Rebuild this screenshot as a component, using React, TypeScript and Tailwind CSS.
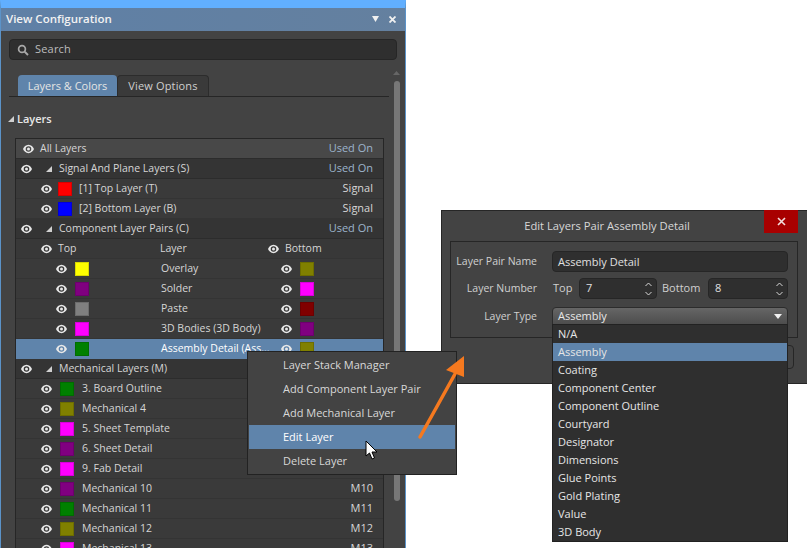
const font = "font-['Open_Sans','Liberation_Sans',sans-serif]";

function Eye({ className = '' }: { className?: string }) {
  return (
    <svg width="11" height="10" viewBox="0 0 11 10" className={`shrink-0 ${className}`}>
      <path
        fillRule="evenodd"
        fill="#e8e8e8"
        d="M5.5 0.8C8.2 0.8 10.2 3 11 5C10.2 7 8.2 9.2 5.5 9.2C2.8 9.2 0.8 7 0 5C0.8 3 2.8 0.8 5.5 0.8ZM5.5 2.2A2.8 2.8 0 1 0 5.5 7.8A2.8 2.8 0 1 0 5.5 2.2Z"
      />
      <circle cx="5.5" cy="5" r="1.5" fill="#e8e8e8" />
    </svg>
  );
}

function Corner() {
  return (
    <svg width="6" height="6" viewBox="0 0 6 6" className="shrink-0">
      <polygon points="6,0 6,6 0,6" fill="#d0d0d0" />
    </svg>
  );
}

function Swatch({ color }: { color: string }) {
  return <div className="w-[14px] h-[14px] shrink-0 border border-black/15" style={{ backgroundColor: color }} />;
}

function GroupRow({ name, right }: { name: string; right: string }) {
  return (
    <div className="h-5 flex items-center bg-[#343434] border-b border-[#2c2c2c] pl-[5px] pr-[10px]">
      <Eye />
      <div className="ml-[14px] mr-[7px]"><Corner /></div>
      <span className="text-[10.5px] text-[#d6d6d6]">{name}</span>
      <span className="ml-auto text-[#9db4cc]">{right}</span>
    </div>
  );
}

function LayerRow({ name, color, right, wide }: { name: string; color: string; right?: string; wide?: boolean }) {
  return (
    <div className="h-5 flex items-center bg-[#3a3a3a] border-b border-[#343434] pl-[25px] pr-[10px]">
      <Eye />
      <div className={wide ? 'ml-[8px] mr-[8px]' : 'ml-[6px] mr-[7px]'}><Swatch color={color} /></div>
      <span className="text-[10.5px] text-[#d6d6d6]">{name}</span>
      {right && <span className="ml-auto text-[#d6d6d6]">{right}</span>}
    </div>
  );
}

function PairRow({ name, top, bottom, selected }: { name: string; top: string; bottom: string; selected?: boolean }) {
  return (
    <div className={`h-5 grid grid-cols-[145px_110px_1fr] items-center border-b ${selected ? 'bg-[#5f84ab] border-[#5f84ab]' : 'bg-[#3a3a3a] border-[#343434]'}`}>
      <div className="flex items-center pl-[40px] gap-[8px]">
        <Eye />
        <Swatch color={top} />
      </div>
      <span className={`whitespace-nowrap text-[10.5px] ${selected ? 'text-white' : 'text-[#d6d6d6]'}`}>{name}</span>
      <div className="flex items-center pl-[10px] gap-[8px]">
        <Eye />
        <Swatch color={bottom} />
      </div>
    </div>
  );
}

const mech = [
  ['3. Board Outline', '#008000', ''],
  ['Mechanical 4', '#808000', ''],
  ['5. Sheet Template', '#ff00ff', ''],
  ['6. Sheet Detail', '#800080', ''],
  ['9. Fab Detail', '#ff00ff', ''],
  ['Mechanical 10', '#800080', 'M10'],
  ['Mechanical 11', '#008000', 'M11'],
  ['Mechanical 12', '#808000', 'M12'],
  ['Mechanical 13', '#ff00ff', 'M13'],
];

function Panel() {
  return (
    <div className="absolute left-0 top-0 w-[406px] h-[548px] overflow-hidden bg-[#434343] border-x border-x-[#5b93c9] border-t-[8px] border-t-[#61afff] text-[11px]">
      <div className="h-[23px] pb-px flex items-center pl-[5px] pr-[9px] bg-gradient-to-r from-[#5f80a6] to-[#64809f]">
        <span className="text-[11.5px] font-semibold text-[#f2f2f2]">View Configuration</span>
        <svg width="7" height="6" viewBox="0 0 7 6" className="ml-auto mr-[10px]"><polygon points="0,0 7,0 3.5,6" fill="#f0f0f0" /></svg>
        <svg width="7" height="7" viewBox="0 0 7 7"><path d="M0.5 0.5L6.5 6.5M6.5 0.5L0.5 6.5" stroke="#f0f0f0" strokeWidth="1.8" /></svg>
      </div>

      <div className="flex">
        <div className="w-[392px] pl-[8px]">
          <div className="mt-2 h-[21px] w-[388px] flex items-center bg-[#2f2f2f] border border-[#262626] rounded pl-[7px] gap-[6px] text-[#bdbdbd]">
            <svg width="12" height="12" viewBox="0 0 12 12"><circle cx="5" cy="5" r="3.4" fill="none" stroke="#a8a8a8" strokeWidth="1.7" /><path d="M7.6 7.6L11 11" stroke="#a8a8a8" strokeWidth="2" /></svg>
            <span className="tracking-[0.2px]">Search</span>
          </div>

          <div className="mt-[15px] w-[380px] flex pl-[9px] border-b border-[#262626] h-[22px]">
            <div className="w-[99px] pt-px flex items-center justify-center bg-[#5f84ab] rounded-t text-[#e4e4e4]">Layers &amp; Colors</div>
            <div className="w-[92px] pt-px flex items-center justify-center bg-[#3a3a3a] border border-b-0 border-[#2c2c2c] rounded-t text-[#cfcfcf] tracking-[0.15px]">View Options</div>
          </div>

          <div className="mt-[14px] -ml-px h-4 flex items-center gap-[3px] font-semibold text-[#e8e8e8]">
            <Corner />
            Layers
          </div>

          <div className="mt-[11px] ml-[6px] w-[369px] border border-[#262626] border-b-0">
            <div className="h-5 flex items-center bg-[#484848] border-b border-[#2c2c2c] pl-[7px] pr-[10px] gap-[6px]">
              <Eye />
              <span className="text-[10.5px] text-[#d6d6d6]">All Layers</span>
              <span className="ml-auto text-[#9db4cc]">Used On</span>
            </div>
            <GroupRow name="Signal And Plane Layers (S)" right="Used On" />
            <LayerRow name="[1] Top Layer (T)" color="#ff0000" right="Signal" />
            <LayerRow name="[2] Bottom Layer (B)" color="#0000ff" right="Signal" />
            <GroupRow name="Component Layer Pairs (C)" right="Used On" />
            <div className="h-5 grid grid-cols-[144px_108px_1fr] items-center bg-[#383838] border-b border-[#343434] text-[10.5px] text-[#d6d6d6]">
              <div className="flex items-center pl-[25px] gap-[6px]"><Eye />Top</div>
              <span>Layer</span>
              <div className="flex items-center gap-[6px]"><Eye />Bottom</div>
            </div>
            <PairRow name="Overlay" top="#ffff00" bottom="#808000" />
            <PairRow name="Solder" top="#800080" bottom="#ff00ff" />
            <PairRow name="Paste" top="#808080" bottom="#800000" />
            <PairRow name="3D Bodies (3D Body)" top="#ff00ff" bottom="#800080" />
            <PairRow name="Assembly Detail (Ass..." top="#008000" bottom="#808000" selected />
            <GroupRow name="Mechanical Layers (M)" right="" />
            {mech.map(([name, color, right]) => (
              <LayerRow key={name} name={name} color={color} right={right} wide />
            ))}
          </div>
        </div>

        <div className="w-[7px] mt-[40px] flex flex-col items-center">
          <svg width="7" height="4" viewBox="0 0 7 4"><polygon points="0,4 7,4 3.5,0" fill="#666" /></svg>
          <div className="mt-[6px] w-[6px] h-[420px] rounded-full bg-[#777]" />
        </div>
      </div>
    </div>
  );
}

function ContextMenu() {
  const items = ['Layer Stack Manager', 'Add Component Layer Pair', 'Add Mechanical Layer', 'Edit Layer', 'Delete Layer'];
  return (
    <div className="absolute left-[247px] top-[351px] w-[210px] h-[124px] bg-[#434343] border border-[#222] p-px text-[11px] text-[#d8d8d8]">
      {items.map((item) => (
        <div key={item} className={`h-6 flex items-center pl-[34px] ${item === 'Edit Layer' ? 'bg-[#5f84ab] text-white' : ''}`}>{item}</div>
      ))}
    </div>
  );
}

function Field({ label, className = '', children }: { label: string; className?: string; children: React.ReactNode }) {
  return (
    <div className={`h-[21px] flex items-center ${className}`}>
      <span className="w-[86px] text-right text-[10.5px] text-[#d0d0d0] shrink-0">{label}</span>
      <div className="ml-[15px] w-[236px] flex items-center">{children}</div>
    </div>
  );
}

function Spinner({ value, className }: { value: string; className: string }) {
  return (
    <div className={`h-[21px] flex items-center justify-between bg-[#2f2f2f] border border-[#262626] rounded pl-[6px] pr-1 text-[#e0e0e0] ${className}`}>
      {value}
      <svg width="7" height="14" viewBox="0 0 7 14" fill="none" stroke="#d8d8d8" strokeWidth="1"><path d="M0.5 4L3.5 1L6.5 4M0.5 10L3.5 13L6.5 10" /></svg>
    </div>
  );
}

function Dialog() {
  const options = ['N/A', 'Assembly', 'Coating', 'Component Center', 'Component Outline', 'Courtyard', 'Designator', 'Dimensions', 'Glue Points', 'Gold Plating', 'Value', '3D Body'];
  return (
    <div className="absolute left-[441px] top-[210px] w-[366px] h-[174px] bg-[#434343] border border-[#262626] border-r-0 text-[11px]">
      <div className="h-[30px] flex items-center justify-center pr-[35px] text-[11.2px] text-[#d8d8d8]">Edit Layers Pair Assembly Detail</div>
      <div className="absolute right-[9px] top-[-1px] w-[34px] h-[23px] bg-[#a80000] flex items-center justify-center">
        <svg width="9" height="9" viewBox="0 0 9 9"><path d="M1 1L8 8M8 1L1 8" stroke="#f4dede" strokeWidth="1.6" /></svg>
      </div>
      <div className="mx-2 w-[348px] h-[97px] border border-[#262626] pt-[9px] flex flex-col gap-[6px]">
        <Field label="Layer Pair Name">
          <div className="w-full h-[21px] pt-px flex items-center bg-[#2f2f2f] border border-[#262626] rounded pl-[5px] text-[#e0e0e0]">Assembly Detail</div>
        </Field>
        <Field label="Layer Number">
          <span className="w-[27px] pl-px text-[#d0d0d0]">Top</span>
          <Spinner value="7" className="w-[78px]" />
          <span className="w-[51px] pl-[5px] text-[#d0d0d0]">Bottom</span>
          <Spinner value="8" className="w-[80px]" />
        </Field>
        <Field label="Layer Type" className="mt-px">
          <div className="w-full h-[20px] flex items-center justify-between bg-gradient-to-b from-[#666] to-[#4a4a4a] border border-[#2c2c2c] rounded-t pl-[5px] pr-[5px] text-[#e8e8e8]">
            Assembly
            <svg width="8" height="5" viewBox="0 0 8 5"><polygon points="0,0 8,0 4,5" fill="#f0f0f0" /></svg>
          </div>
        </Field>
      </div>
      <div className="absolute right-[13px] top-[134px] w-5 h-6 border border-[#262626] rounded" />
      <div className="absolute left-[110px] top-[113px] w-[236px] h-[218px] bg-[#2f2f2f] border border-[#222] text-[#e6e6e6]">
        {options.map((o) => (
          <div key={o} className={`h-[18px] flex items-center pl-[5px] ${o === 'Assembly' ? 'bg-[#5f84ab]' : ''}`}>{o}</div>
        ))}
      </div>
    </div>
  );
}

export default function App() {
  return (
    <div className={`relative w-[807px] h-[548px] overflow-hidden bg-white ${font}`}>
      <Panel />
      <Dialog />
      <ContextMenu />
      {/* orange arrow over the menu and the dialog */}
      <svg width="80" height="100" viewBox="0 0 80 100" className="absolute left-[400px] top-[350px]">
        <path d="M20 87L55 24" stroke="#f5791f" strokeWidth="3.5" strokeLinecap="round" />
        <polygon points="64,6 64,27 46,20" fill="#f5791f" />
      </svg>
      {/* mouse pointer */}
      <svg width="14" height="21" viewBox="0 0 14 21" className="absolute left-[365px] top-[440px]">
        <path d="M1 1V16L4.5 13L7 19L9.5 18L7 12H12L1 1Z" fill="#fff" stroke="#000" strokeWidth="1" />
      </svg>
    </div>
  );
}
